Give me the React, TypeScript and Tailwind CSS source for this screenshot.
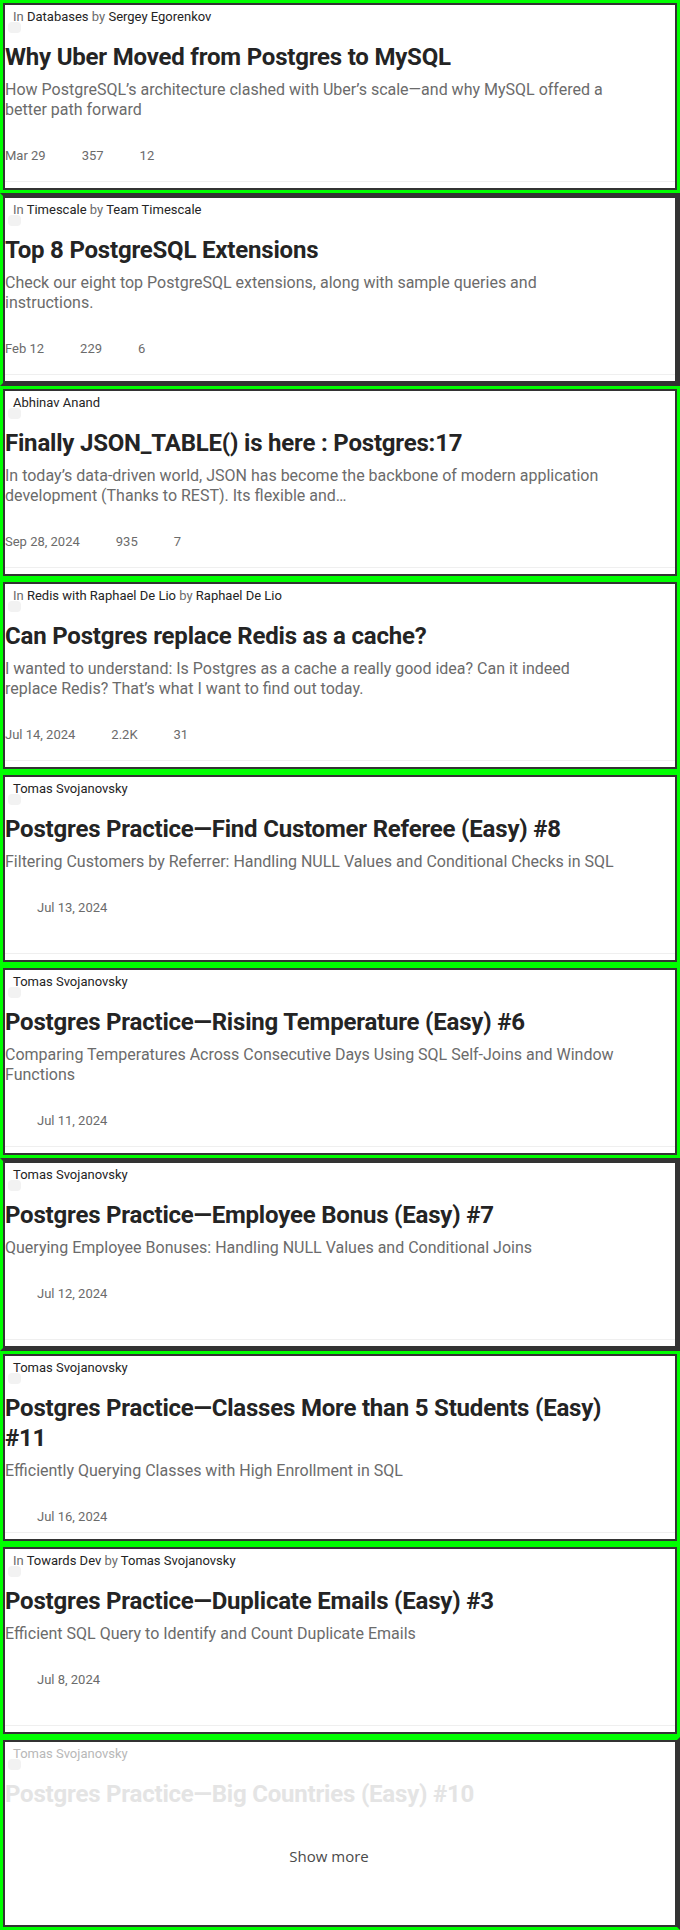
import clsx from 'clsx'

type Post = {
  pub?: string
  author: string
  title: string
  subtitle: string
  date: string
  claps?: string
  comments?: string
  green: boolean
}

const posts: Post[] = [
  {
    pub: 'Databases',
    author: 'Sergey Egorenkov',
    title: 'Why Uber Moved from Postgres to MySQL',
    subtitle: 'How PostgreSQL’s architecture clashed with Uber’s scale—and why MySQL offered a better path forward',
    date: 'Mar 29',
    claps: '357',
    comments: '12',
    green: true,
  },
  {
    pub: 'Timescale',
    author: 'Team Timescale',
    title: 'Top 8 PostgreSQL Extensions',
    subtitle: 'Check our eight top PostgreSQL extensions, along with sample queries and instructions.',
    date: 'Feb 12',
    claps: '229',
    comments: '6',
    green: false,
  },
  {
    author: 'Abhinav Anand',
    title: 'Finally JSON_TABLE() is here : Postgres:17',
    subtitle: 'In today’s data-driven world, JSON has become the backbone of modern application development (Thanks to REST). Its flexible and…',
    date: 'Sep 28, 2024',
    claps: '935',
    comments: '7',
    green: true,
  },
  {
    pub: 'Redis with Raphael De Lio',
    author: 'Raphael De Lio',
    title: 'Can Postgres replace Redis as a cache?',
    subtitle: 'I wanted to understand: Is Postgres as a cache a really good idea? Can it indeed replace Redis? That’s what I want to find out today.',
    date: 'Jul 14, 2024',
    claps: '2.2K',
    comments: '31',
    green: true,
  },
  {
    author: 'Tomas Svojanovsky',
    title: 'Postgres Practice—Find Customer Referee (Easy) #8',
    subtitle: 'Filtering Customers by Referrer: Handling NULL Values and Conditional Checks in SQL',
    date: 'Jul 13, 2024',
    green: true,
  },
  {
    author: 'Tomas Svojanovsky',
    title: 'Postgres Practice—Rising Temperature (Easy) #6',
    subtitle: 'Comparing Temperatures Across Consecutive Days Using SQL Self-Joins and Window Functions',
    date: 'Jul 11, 2024',
    green: true,
  },
  {
    author: 'Tomas Svojanovsky',
    title: 'Postgres Practice—Employee Bonus (Easy) #7',
    subtitle: 'Querying Employee Bonuses: Handling NULL Values and Conditional Joins',
    date: 'Jul 12, 2024',
    green: false,
  },
  {
    author: 'Tomas Svojanovsky',
    title: 'Postgres Practice—Classes More than 5 Students (Easy) #11',
    subtitle: 'Efficiently Querying Classes with High Enrollment in SQL',
    date: 'Jul 16, 2024',
    green: true,
  },
  {
    pub: 'Towards Dev',
    author: 'Tomas Svojanovsky',
    title: 'Postgres Practice—Duplicate Emails (Easy) #3',
    subtitle: 'Efficient SQL Query to Identify and Count Duplicate Emails',
    date: 'Jul 8, 2024',
    green: true,
  },
]

function Byline({ pub, author, faded }: { pub?: string; author: string; faded?: boolean }) {
  return (
    <div className="relative h-5 pl-[8px] pt-[2px] text-[13px] leading-5">
      <span className="absolute left-[3px] top-[17px] h-[11px] w-[13px] rounded-sm bg-[#f2f2f2]" />
      <span className="relative">
        {pub && (
          <>
            <span className="text-[#6b6b6b]">In </span>
            <span className="text-[#242424]">{pub}</span>
            <span className="text-[#6b6b6b]"> by </span>
          </>
        )}
        <span className={faded ? 'text-[#b8b8b8]' : 'text-[#242424]'}>{author}</span>
      </span>
    </div>
  )
}

function Card({ post }: { post: Post }) {
  const member = !post.claps
  return (
    <div
      className={clsx(
        'h-[193px] border-[3px]',
        post.green ? 'border-[#00ff00]' : 'border-[#333333] border-l-[#00ff00]',
      )}
    >
      <div className="flex h-full flex-col border-2 border-[#333333] bg-white">
        <Byline pub={post.pub} author={post.author} />
        <div className="w-[618px]">
          <h2 className="mt-[17px] text-[24px] font-bold leading-[30px] tracking-[-0.2px] text-[#242424]">
            {post.title}
          </h2>
          <p className="mt-[8px] text-[16px] leading-5 text-[#6b6b6b]">{post.subtitle}</p>
          <div
            className={clsx(
              'mt-[26px] flex h-5 items-center gap-[36px] text-[13px] leading-5 text-[#6b6b6b]',
              member && 'pl-[32px]',
            )}
          >
            <span>{post.date}</span>
            {post.claps && <span>{post.claps}</span>}
            {post.comments && <span>{post.comments}</span>}
          </div>
        </div>
        <div className="mb-[6px] mt-auto h-px bg-[#efefef]" />
      </div>
    </div>
  )
}

export default function App() {
  return (
    <div className="min-h-[1930px] bg-[#333333] font-['Roboto',sans-serif]">
      {posts.map((post) => (
        <Card key={post.title} post={post} />
      ))}
      <div className="h-[193px] border-[3px] border-[#00ff00] border-r-[#333333]">
        <div className="flex h-full flex-col border-2 border-[#333333] bg-white">
          <Byline author="Tomas Svojanovsky" faded />
          <h2 className="mt-[17px] text-[24px] font-bold leading-[30px] tracking-[-0.2px] text-[#e4e4e4]">
            Postgres Practice—Big Countries (Easy) #10
          </h2>
          <div className="mt-[35px] w-[648px] text-center">
            <button className="font-['Open_Sans',sans-serif] text-[15px] leading-6 text-[#4a4a4a]">
              Show more
            </button>
          </div>
        </div>
      </div>
    </div>
  )
}
